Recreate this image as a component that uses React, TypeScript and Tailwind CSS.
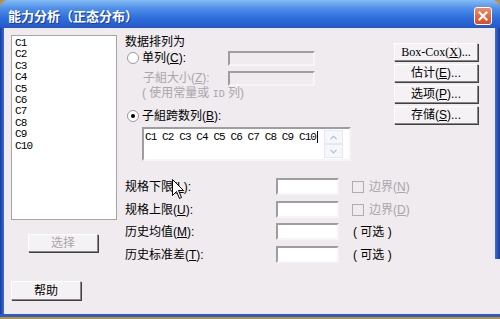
import { ChevronDown, ChevronUp } from 'lucide-react';

const columns = ['C1', 'C2', 'C3', 'C4', 'C5', 'C6', 'C7', 'C8', 'C9', 'C10'];

function XpButton({
  children,
  disabled = false,
  className = '',
}: {
  children: React.ReactNode;
  disabled?: boolean;
  className?: string;
}) {
  return (
    <div
      className={`flex items-center justify-center border border-t-white border-l-white border-r-[#8a878a] border-b-[#8a878a] bg-[#f4f2f4] shadow-[1px_1px_0_#404040] text-[12px] leading-none ${
        disabled ? 'text-[#aaa6aa]' : 'text-black'
      } ${className}`}
    >
      {children}
    </div>
  );
}

function Field({ disabled = false, className = '' }: { disabled?: boolean; className?: string }) {
  return (
    <div
      className={`border-2 border-t-[#a09da0] border-l-[#a09da0] border-b-[#f6f4f6] border-r-[#f6f4f6] ${
        disabled ? 'bg-[#efebef]' : 'bg-white'
      } ${className}`}
    />
  );
}

function Radio({ checked }: { checked: boolean }) {
  return (
    <span className="flex h-[12px] w-[12px] items-center justify-center rounded-full border border-[#9a9a9a] bg-white">
      {checked ? <span className="h-[4px] w-[4px] rounded-full bg-black" /> : null}
    </span>
  );
}

function Check() {
  return <span className="block h-[12px] w-[12px] border border-[#b0acb0] bg-[#efebef]" />;
}

export default function App() {
  return (
    <div className="relative h-[319px] w-[500px] overflow-hidden bg-[#b8923c] font-['Liberation_Sans','Noto_Sans_CJK_SC',sans-serif] text-[12px] text-black">
      <div className="flex h-[317px] w-[500px] flex-col">
        {/* title bar */}
        <div className="flex h-[28px] items-center justify-between rounded-t-[8px] bg-[linear-gradient(to_bottom,#86bcf4,#4f8fe8_30%,#2f6ddb_65%,#2457c8)] pl-[8px] pr-[8px] pt-[3px]">
          <span className="font-['Noto_Sans_CJK_SC',sans-serif] text-[13px] font-bold leading-none text-white [text-shadow:1px_1px_0_#1a3f9a]">
            能力分析（正态分布）
          </span>
          <span className="flex h-[18px] w-[18px] items-center justify-center rounded-[3px] border border-white bg-[linear-gradient(to_bottom,#f08a66,#dd4a22)] text-white">
            <svg width="10" height="10" viewBox="0 0 10 10">
              <path d="M1.5 1.5 L8.5 8.5 M8.5 1.5 L1.5 8.5" stroke="white" strokeWidth="2.2" strokeLinecap="square" />
            </svg>
          </span>
        </div>

        <div className="flex flex-1">
          <div className="w-[4px] bg-[linear-gradient(to_right,#163aa0,#3a6fd8)]" />

          {/* dialog body */}
          <div className="flex flex-1 bg-[#efebef] pl-[7px] pt-[7px]">
            <div className="flex w-[106px] flex-col">
              <div className="h-[185px] border border-[#a8a4a8] bg-white pl-[3px] pt-[2px] font-['Liberation_Mono',monospace] text-[11px] leading-[11.4px] tracking-[-0.9px]">
                {columns.map((c) => (
                  <div key={c}>{c}</div>
                ))}
              </div>
              <XpButton disabled className="ml-[17px] mt-[14px] h-[18px] w-[70px]">
                选择
              </XpButton>
              <XpButton className="mt-[29px] h-[19px] w-[70px]">帮助</XpButton>
            </div>

            <div className="ml-[8px] flex flex-col">
              <div className="flex">
                <div className="flex w-[226px] flex-col">
                  <div className="mt-[1px] h-[12px] leading-[12px]">数据排列为</div>
                  <div className="mt-[2px] flex h-[16px] items-center">
                    <div className="flex w-[103px] items-center">
                      <span className="ml-[2px]">
                        <Radio checked={false} />
                      </span>
                      <span className="ml-[3px]">
                        单列(<u>C</u>):
                      </span>
                    </div>
                    <Field disabled className="h-[15px] w-[87px]" />
                  </div>
                  <div className="mt-[4px] flex h-[16px] items-center">
                    <div className="w-[103px] pl-[18px] text-[#aaa6aa]">
                      子組大小(<u>Z</u>):
                    </div>
                    <Field disabled className="h-[15px] w-[87px]" />
                  </div>
                  <div className="mt-[1px] h-[12px] pl-[17px] leading-[12px] text-[#aaa6aa]">
                    ( 使用常量或 <span className="font-['Liberation_Mono',monospace] text-[10px]">ID</span> 列)
                  </div>
                  <div className="mt-[11px] flex h-[12px] items-center">
                    <span className="ml-[2px]">
                      <Radio checked />
                    </span>
                    <span className="ml-[3px]">
                      子組跨数列(<u>B</u>):
                    </span>
                  </div>
                  <div className="ml-[17px] mt-[5px] flex h-[34px] w-[209px] border-2 border-t-[#a09da0] border-l-[#a09da0] border-b-[#f6f4f6] border-r-[#f6f4f6] bg-white">
                    <div className="flex flex-1 items-start pl-[1px] pt-[2px] font-['Liberation_Mono',monospace] text-[11px] leading-[12px] tracking-[-0.9px]">
                      C1 C2 C3 C4 C5 C6 C7 C8 C9 C10
                      <span className="ml-[1px] h-[12px] w-[1px] bg-black" />
                    </div>
                    <div className="mr-[6px] flex w-[19px] flex-col pt-[1px]">
                      <div className="flex h-[14px] items-center justify-center border border-[#e4e8f2] bg-[#f6f7fb]">
                        <ChevronUp size={11} strokeWidth={2.5} color="#a9bcdc" />
                      </div>
                      <div className="flex h-[14px] items-center justify-center border border-[#e4e8f2] bg-[#f6f7fb]">
                        <ChevronDown size={11} strokeWidth={2.5} color="#a9bcdc" />
                      </div>
                    </div>
                  </div>
                </div>

                <div className="ml-[43px] flex flex-col gap-[3px] pt-[8px]">
                  <XpButton className="h-[18px] w-[84px] font-['Liberation_Serif','Noto_Sans_CJK_SC',serif] text-[11px]">
                    Box-Cox(<u>X</u>)...
                  </XpButton>
                  <XpButton className="h-[18px] w-[84px]">
                    估计(<u>E</u>)...
                  </XpButton>
                  <XpButton className="h-[18px] w-[84px]">
                    选项(<u>P</u>)...
                  </XpButton>
                  <XpButton className="h-[18px] w-[84px]">
                    存储(<u>S</u>)...
                  </XpButton>
                </div>
              </div>

              <div className="mt-[17px] flex h-[17px] items-center">
                <span className="w-[151px]">
                  规格下限(<u>L</u>):
                </span>
                <Field className="h-[17px] w-[63px]" />
                <span className="ml-[13px]">
                  <Check />
                </span>
                <span className="ml-[5px] text-[#aaa6aa]">
                  边界(<u>N</u>)
                </span>
              </div>
              <div className="mt-[6px] flex h-[17px] items-center">
                <span className="w-[151px]">
                  规格上限(<u>U</u>):
                </span>
                <Field className="h-[17px] w-[63px]" />
                <span className="ml-[13px]">
                  <Check />
                </span>
                <span className="ml-[5px] text-[#aaa6aa]">
                  边界(<u>D</u>)
                </span>
              </div>
              <div className="mt-[5px] flex h-[17px] items-center">
                <span className="w-[151px]">
                  历史均值(<u>M</u>):
                </span>
                <Field className="h-[17px] w-[63px]" />
                <span className="ml-[14px]">( 可选 )</span>
              </div>
              <div className="mt-[6px] flex h-[17px] items-center">
                <span className="w-[151px]">
                  历史标准差(<u>T</u>):
                </span>
                <Field className="h-[17px] w-[63px]" />
                <span className="ml-[14px]">( 可选 )</span>
              </div>
            </div>
          </div>

          <div className="flex w-[5px] flex-col">
            <div className="h-[231px] bg-[linear-gradient(to_right,#3a6fd8,#1a3a98)]" />
            <div className="flex-1 bg-[#efebef]" />
          </div>
        </div>

        <div className="h-[3px] bg-[#2c5ccc]" />
      </div>

      {/* mouse pointer */}
      <svg className="absolute left-[172px] top-[179px]" width="13" height="21" viewBox="0 0 13 21">
        <path d="M0.5 0.5 L0.5 16.5 L4.5 12.5 L7.5 19.5 L9.5 18.5 L6.5 11.5 L11.5 11.5 Z" fill="white" stroke="black" strokeWidth="1" />
      </svg>
    </div>
  );
}
